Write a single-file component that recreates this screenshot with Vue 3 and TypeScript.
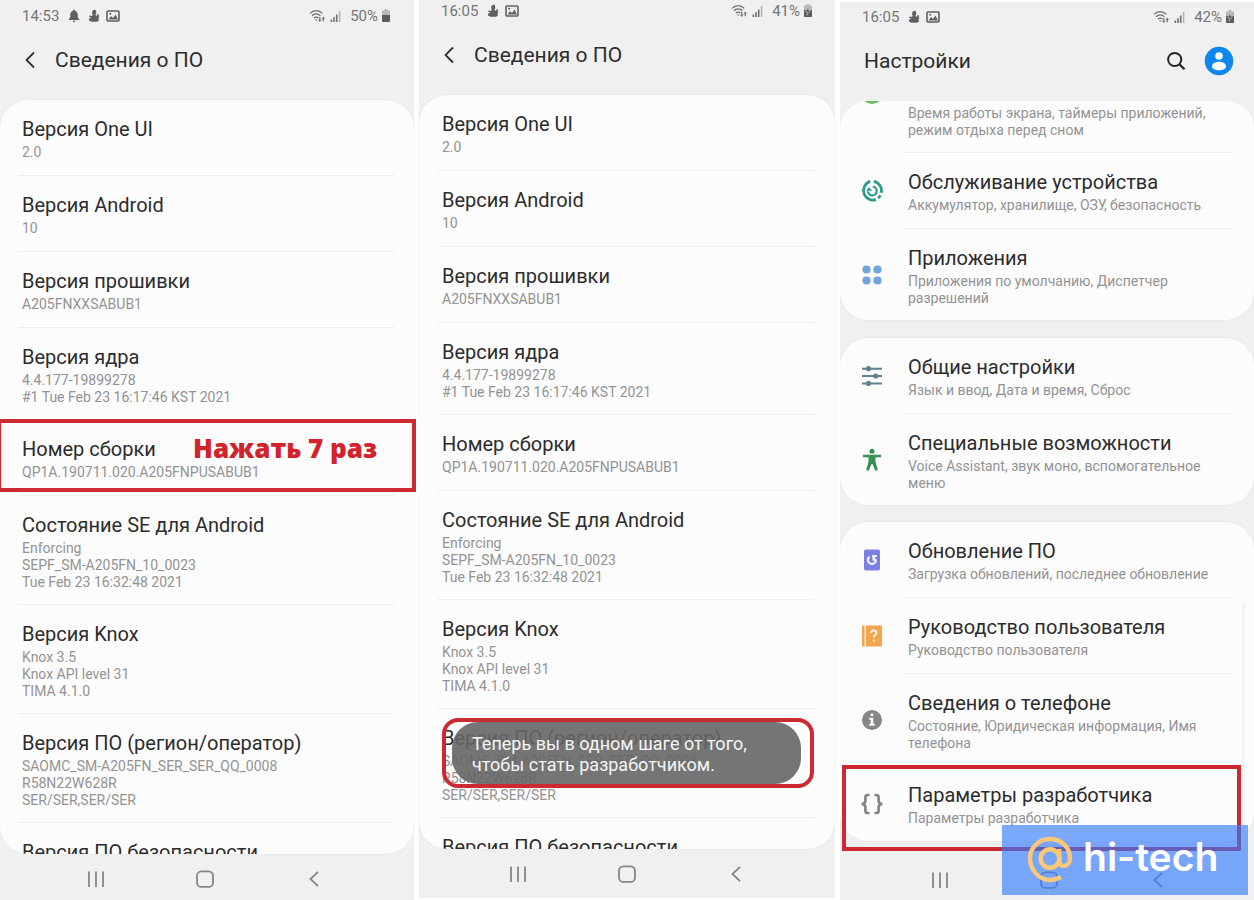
<script setup lang="ts">
interface InfoRow {
  title: string
  lines: string[]
}

interface SettingRow {
  icon: string
  title?: string
  text: string
  tall?: boolean
}

interface Screen {
  id: string
  kind: 'info' | 'settings'
  heading: string
  time: string
  battery: string
  bell?: boolean
  charging?: boolean
}

const screens: Screen[] = [
  { id: 'first', kind: 'info', heading: 'Сведения о ПО', time: '14:53', battery: '50%', bell: true },
  { id: 'second', kind: 'info', heading: 'Сведения о ПО', time: '16:05', battery: '41%', charging: true },
  { id: 'third', kind: 'settings', heading: 'Настройки', time: '16:05', battery: '42%', charging: true },
]

const infoRows: InfoRow[] = [
  { title: 'Версия One UI', lines: ['2.0'] },
  { title: 'Версия Android', lines: ['10'] },
  { title: 'Версия прошивки', lines: ['A205FNXXSABUB1'] },
  { title: 'Версия ядра', lines: ['4.4.177-19899278', '#1 Tue Feb 23 16:17:46 KST 2021'] },
  { title: 'Номер сборки', lines: ['QP1A.190711.020.A205FNPUSABUB1'] },
  { title: 'Состояние SE для Android', lines: ['Enforcing', 'SEPF_SM-A205FN_10_0023', 'Tue Feb 23 16:32:48 2021'] },
  { title: 'Версия Knox', lines: ['Knox 3.5', 'Knox API level 31', 'TIMA 4.1.0'] },
  { title: 'Версия ПО (регион/оператор)', lines: ['SAOMC_SM-A205FN_SER_SER_QQ_0008', 'R58N22W628R', 'SER/SER,SER/SER'] },
  { title: 'Версия ПО безопасности', lines: [] },
]

const groups: SettingRow[][] = [
  [
    { icon: 'wellbeing', text: 'Время работы экрана, таймеры приложений, режим отдыха перед сном', tall: true },
    { icon: 'care', title: 'Обслуживание устройства', text: 'Аккумулятор, хранилище, ОЗУ, безопасность' },
    { icon: 'apps', title: 'Приложения', text: 'Приложения по умолчанию, Диспетчер разрешений', tall: true },
  ],
  [
    { icon: 'sliders', title: 'Общие настройки', text: 'Язык и ввод, Дата и время, Сброс' },
    { icon: 'person', title: 'Специальные возможности', text: 'Voice Assistant, звук моно, вспомогательное меню', tall: true },
  ],
  [
    { icon: 'update', title: 'Обновление ПО', text: 'Загрузка обновлений, последнее обновление' },
    { icon: 'manual', title: 'Руководство пользователя', text: 'Руководство пользователя' },
    { icon: 'about', title: 'Сведения о телефоне', text: 'Состояние, Юридическая информация, Имя телефона', tall: true },
    { icon: 'braces', title: 'Параметры разработчика', text: 'Параметры разработчика' },
  ],
]
</script>

<template>
  <main class="page">
    <section v-for="s in screens" :key="s.id" class="phone" :class="s.id">
      <div class="status">
        <span class="clock">{{ s.time }}</span>
        <svg v-if="s.bell" class="s-bell" width="12" height="14" viewBox="0 0 12 14">
          <path d="M6 .8c.8 0 1.2.5 1.2 1.1C9 2.5 9.8 4 9.8 6v2.6l1.5 1.7v.8H.7v-.8l1.5-1.7V6c0-2 .8-3.500 2.600-4.100C4.800 1.300 5.200.8 6 .8zM4.700 11.800h2.600c0 .9-.6 1.400-1.300 1.400s-1.300-.5-1.300-1.400z" fill="#606060" />
        </svg>
        <svg width="12" height="14" viewBox="0 0 12 14">
          <path d="M4.500 1.800 6.500.6l1.700 1.200v2.600l-.8 1 .6 1.400 1.500-.6V4.800l1.500.6-.3 2 1 .6-1.200 1 .5 2.400-2 1.400H3.500L.8 11.400l.4-1.900 2-.5L.9 7.200l1-.8 2 .6.8-1.500-.7-1.300z" fill="#606060" />
        </svg>
        <svg width="14" height="12" viewBox="0 0 14 12">
          <rect x="1" y="1" width="12" height="10" rx="1" fill="none" stroke="#606060" stroke-width="1.600" />
          <path d="M2.500 9.500 5 6l2 2 2.500-3.500 2.500 5z" fill="#606060" />
          <circle cx="4.300" cy="3.800" r="1" fill="#606060" />
        </svg>
        <span class="spacer"></span>
        <svg width="17" height="14" viewBox="0 0 17 14">
          <g fill="none" stroke="#707070" stroke-width="1.300">
            <path d="M1 4.400C4.600.7 9.800.7 13.400 4.400M3 6.800c2.500-2.500 6-2.500 8.400 0M5 9c1.300-1.300 3.100-1.300 4.400 0" />
          </g>
          <path d="m7.200 12-1.300-1.500h2.600zM10.800 13 9 10.700h1.200V8h1.200v2.700h1.200zM14.300 7.500l1.700 2.300h-1.100v2.400h-1.200V9.800h-1.100z" fill="#707070" />
        </svg>
        <svg class="s-signal" width="12" height="12" viewBox="0 0 12 12">
          <path d="M.5 9.500h1.600V12H.5zM3.200 7.300h1.600V12H3.200zM5.900 4.600h1.600V12H5.900z" fill="#707070" />
          <path d="M8.800 1h1.600v11H8.800z" fill="#b4b4b4" />
        </svg>
        <span class="percent">{{ s.battery }}</span>
        <svg class="s-battery" width="8" height="13" viewBox="0 0 8 13">
          <path d="M2.500 0h3v1.500H8V6H0V1.500h2.500z" fill="#b8b8b8" />
          <path d="M0 6h8v6.200q0 .8-.8.8H.8q-.8 0-.8-.8z" fill="#5c5c5c" />
          <path v-if="s.charging" d="M4.800 2.500 1.500 7.800h2L3 11.200l3.500-5h-2z" fill="#505050" stroke="#d0d0d0" stroke-width=".6" />
        </svg>
      </div>

      <header class="head">
        <button v-if="s.kind === 'info'" type="button" class="icon-btn back" aria-label="Назад">
          <svg width="12" height="18" viewBox="0 0 12 18"><path d="M10 1.500 2.500 9l7.500 7.500" fill="none" stroke="#303030" stroke-width="1.800" /></svg>
        </button>
        <h1>{{ s.heading }}</h1>
        <template v-if="s.kind === 'settings'">
          <span class="spacer"></span>
          <button type="button" class="icon-btn" aria-label="Поиск">
            <svg width="20" height="20" viewBox="0 0 20 20"><circle cx="8.700" cy="8.500" r="6.600" fill="none" stroke="#252525" stroke-width="2" /><path d="m13.400 13.200 5.100 5.100" stroke="#252525" stroke-width="2.300" /></svg>
          </button>
          <button type="button" class="icon-btn avatar" aria-label="Учетная запись">
            <svg width="30" height="30" viewBox="0 0 30 30"><circle cx="15" cy="15" r="14.300" fill="#0d86ee" /><circle cx="15" cy="10" r="3.800" fill="#f7fbff" /><path d="M8 20.500c0-3.100 3.200-4.700 7-4.700s7 1.600 7 4.700c0 2.400-3 3.800-7 3.800s-7-1.400-7-3.800z" fill="#f7fbff" /></svg>
          </button>
        </template>
      </header>

      <ul v-if="s.kind === 'info'" class="card info">
        <li v-for="row in infoRows" :key="row.title" class="info-row" :class="{ multi: row.lines.length > 1 }">
          <h2>{{ row.title }}</h2>
          <p v-for="line in row.lines" :key="line">{{ line }}</p>
        </li>
      </ul>

      <div v-else class="scroller">
        <ul v-for="(group, g) in groups" :key="g" class="card">
          <li v-for="row in group" :key="row.icon">
            <a href="#" class="setting" :class="{ cut: !row.title, tall: row.tall }">
              <span class="glyph">
                <svg width="24" height="24" viewBox="0 0 24 24" aria-hidden="true">
                  <circle v-if="row.icon === 'wellbeing'" cx="12" cy="12" r="11" fill="#6fb868" />
                  <g v-else-if="row.icon === 'care'" fill="none" stroke="#2c9a88">
                    <path d="M13.800 2.400a9.500 9.500 0 0 1 7.500 11.400M20.400 16.300A9.500 9.500 0 0 1 18 19.300M16 20.600A9.500 9.500 0 1 1 10.200 2.400" stroke-width="2.700" />
                    <path d="M12.800 7.700a4.400 4.400 0 1 1-4.900 4.600" stroke-width="2.200" />
                    <path d="M6 11.800h6.200L9 8.300z" fill="#2c9a88" stroke="none" />
                  </g>
                  <g v-else-if="row.icon === 'apps'" fill="#6fa4dc">
                    <circle cx="6.500" cy="6.500" r="4.100" /><circle cx="17.500" cy="6.500" r="4.100" /><circle cx="6.500" cy="17.500" r="4.100" /><circle cx="17.500" cy="17.500" r="4.100" />
                  </g>
                  <g v-else-if="row.icon === 'sliders'" fill="#62818d">
                    <path d="M2 3.700h20v2H2zM2 11h20v2H2zM2 18.400h20v2H2z" />
                    <circle cx="8.500" cy="4.700" r="2.600" /><circle cx="15.700" cy="12" r="2.600" /><circle cx="8.500" cy="19.400" r="2.600" />
                  </g>
                  <g v-else-if="row.icon === 'person'" fill="#369155">
                    <circle cx="12" cy="3.200" r="2.500" />
                    <path d="M3 6.700h18v2.500h-5.500v4.300L17.800 22l-2.600.7L12.500 16h-1l-2.700 6.700-2.600-.7 2.300-8.500V9.200H3z" />
                  </g>
                  <g v-else-if="row.icon === 'update'">
                    <rect x="4" y="1.500" width="16" height="21" rx="1.800" fill="#7c80e2" />
                    <path d="M9.600 8.800a3.900 3.900 0 1 0 6.100 2.400" fill="none" stroke="#f4f4ff" stroke-width="2.100" />
                    <path d="M12 7h4.700v2h-1.500v3.700H12.700z" fill="#f4f4ff" />
                  </g>
                  <g v-else-if="row.icon === 'manual'">
                    <path d="M2 1.500h2.600v21H2zM5.800 1.500h15.400q.8 0 .8.800v19.400q0 .8-.8.800H5.800z" fill="#f2a650" />
                    <path d="M11 9c0-3.600 5.500-3.500 5.500-.2 0 2.200-2.700 2.300-2.700 4.800M13.800 15.500v2" fill="none" stroke="#fff8ea" stroke-width="1.800" />
                  </g>
                  <g v-else-if="row.icon === 'about'">
                    <circle cx="12" cy="12" r="10" fill="#868686" />
                    <path d="M10.700 5.500h2.600v2.600h-2.600zM9.300 9.800h4v6h1.500v2H9.200v-2h1.500v-4H9.300z" fill="#fcfcfc" />
                  </g>
                  <path v-else d="M9.500 3H7.700Q5.400 3 5.400 5.300v3.200Q5.400 12 1.500 12q3.900 0 3.900 3.500v3.200Q5.400 21 7.700 21h1.800M14.500 3h1.800q2.300 0 2.300 2.300v3.200Q18.600 12 22.500 12q-3.900 0-3.900 3.500v3.200q0 2.300-2.300 2.300h-1.800" fill="none" stroke="#868686" stroke-width="2.700" />
                </svg>
              </span>
              <span class="words">
                <span v-if="row.title" class="name">{{ row.title }}</span>
                <span class="note">{{ row.text }}</span>
              </span>
            </a>
          </li>
        </ul>
      </div>

      <nav class="keys">
        <button type="button" class="icon-btn" aria-label="Последние">
          <svg width="20" height="20" viewBox="0 0 20 20"><path d="M3 2.500v15.500M10 2.500v15.500M17 2.500v15.500" stroke="#858585" stroke-width="1.800" /></svg>
        </button>
        <button type="button" class="icon-btn" aria-label="Главный экран">
          <svg width="20" height="20" viewBox="0 0 20 20"><rect x="2" y="2.300" width="16" height="15.600" rx="4.500" fill="none" stroke="#858585" stroke-width="1.800" /></svg>
        </button>
        <button type="button" class="icon-btn" aria-label="Назад">
          <svg width="20" height="20" viewBox="0 0 20 20"><path d="M14 2.800 6.500 10l7.500 7.200" fill="none" stroke="#858585" stroke-width="1.800" /></svg>
        </button>
      </nav>

      <div v-if="s.id === 'first'" class="frame frame-build"><strong>Нажать 7 раз</strong></div>
      <div v-if="s.id === 'second'" class="frame frame-toast">
        <p class="toast" role="status">Теперь вы в одном шаге от того, чтобы стать разработчиком.</p>
      </div>
      <template v-if="s.id === 'third'">
        <span class="scrollbar"></span>
        <div class="frame frame-dev"></div>
        <div class="brand">
          <svg width="48" height="50" viewBox="0 0 48 50" aria-hidden="true">
            <g fill="none" stroke="#fcc878" stroke-width="4.400">
              <circle cx="24" cy="23.500" r="9.300" />
              <path d="M33.300 14v11.500c0 8 10.700 7 10.700-2C44 12 35 4 24 4S4 12.500 4 23.500 13 45 24 45c4 0 7.500-1 11-3" />
            </g>
          </svg>
          <span>hi-tech</span>
        </div>
      </template>
    </section>
  </main>
</template>

<style>
body {
  margin: 0;
  background: #fff;
}
</style>

<style scoped>
.page {
  display: grid;
  grid-template-columns: 414fr 416fr 414fr;
  column-gap: 5px;
  height: 100vh;
  overflow: hidden;
  font-family: Roboto, "Noto Sans", sans-serif;
  color: #2c2c2c;
}

.phone {
  position: relative;
  display: flex;
  flex-direction: column;
  min-width: 0;
  min-height: 0;
  box-sizing: border-box;
  background: #f0f0f0;
}

.first {
  --inset: 18px;
  --status-end: 24px;
  padding-top: 5px;
}

.second {
  --inset: 19px;
  --status-end: 23px;
  margin-bottom: 2px;
}

.third {
  --status-end: 20px;
  margin-top: 2px;
  padding-top: 4px;
}

h1,
h2,
p,
ul {
  margin: 0;
  padding: 0;
  font-weight: 400;
  list-style: none;
}

.icon-btn {
  display: flex;
  align-items: center;
  justify-content: center;
  padding: 0;
  border: 0;
  background: none;
}

.spacer {
  flex: 1;
}

.status {
  display: flex;
  align-items: center;
  gap: 6px;
  flex: none;
  height: 21px;
  padding: 0 var(--status-end) 0 22px;
  font-size: 15px;
  color: #757575;
}

.clock {
  margin-right: 3px;
}

.s-bell {
  margin-right: 2px;
}

.s-signal {
  margin-left: -2px;
}

.percent {
  margin-left: 2px;
}

.s-battery {
  margin-left: -2px;
}

.head {
  display: flex;
  align-items: center;
  flex: none;
  height: 68px;
  padding: 0 20px 0 24px;
  margin-bottom: 6px;
}

.back {
  margin-right: 19px;
}

h1 {
  font-size: 21px;
  line-height: 28px;
}

.avatar {
  margin-left: 18px;
}

.card {
  border-radius: 28px;
  background: #fcfcfc;
  box-shadow: 0 0 2px #dedede;
}

.info {
  flex: 1;
  min-height: 0;
  overflow: hidden;
}

.info-row {
  margin: 0 20px 0 var(--inset);
  padding: 15px 4px 14px;
  border-bottom: 1px solid #eee;
}

.info-row.multi {
  padding-bottom: 13px;
}

h2,
.name {
  margin-bottom: 1px;
  font-size: 20px;
  line-height: 28px;
}

.info-row p,
.note {
  font-size: 14px;
  line-height: 17px;
  color: #939393;
}

.scroller {
  flex: 1;
  min-height: 0;
  overflow: hidden;
  border-radius: 28px 28px 0 0;
}

.scroller .card {
  margin-bottom: 17px;
}

.scroller .card:first-child {
  margin-top: -68px;
  margin-bottom: 18px;
}

.setting {
  display: flex;
  align-items: stretch;
  color: inherit;
  text-decoration: none;
}

.glyph {
  display: flex;
  align-items: center;
  justify-content: center;
  flex: none;
  width: 64px;
}

.words {
  display: flex;
  flex: 1;
  flex-direction: column;
  margin-right: 22px;
  padding: 15px 4px 14px;
  border-bottom: 1px solid #eee;
}

.tall .words {
  padding-bottom: 13px;
}

.cut .words {
  padding-top: 72px;
}

.card li:last-child .words {
  border-bottom: 0;
}

.keys {
  display: flex;
  justify-content: center;
  align-items: flex-start;
  flex: none;
  height: 49px;
}

.first .keys {
  height: 46px;
  padding-right: 5px;
}

.third .keys {
  height: 45px;
  padding-left: 3px;
}

.keys .icon-btn {
  width: 109px;
  height: 50px;
}

.frame {
  position: absolute;
  box-sizing: border-box;
  border: 4px solid #cb2a33;
}

.frame-build {
  top: 419px;
  left: -3px;
  right: -2px;
  height: 73px;
  padding-left: 192px;
}

.frame-build strong {
  font: 800 26px/50px "Open Sans", "Noto Sans", sans-serif;
  color: #d2222b;
}

.frame-toast {
  top: 718px;
  left: 23px;
  right: 21px;
  height: 70px;
  border-radius: 16px;
  padding: 0 9px 0 6px;
}

.toast {
  height: 62px;
  box-sizing: border-box;
  padding: 11px 40px 9px 20px;
  border-radius: 26px;
  background: rgba(102, 102, 102, 0.9);
  color: #f5f5f5;
  font-size: 18px;
  line-height: 21px;
}

.frame-dev {
  top: 763px;
  left: 2px;
  right: 13px;
  height: 86px;
}

.scrollbar {
  position: absolute;
  top: 600px;
  right: 9px;
  width: 3px;
  height: 230px;
  background: #f5f5f5;
}

.brand {
  position: absolute;
  right: 6px;
  bottom: 5px;
  display: flex;
  align-items: center;
  gap: 9px;
  box-sizing: border-box;
  width: 246px;
  height: 70px;
  padding-left: 24px;
  background: rgba(49, 122, 253, 0.64);
  color: #fff;
  font: 600 39px/60px Inter, sans-serif;
}

.brand span {
  padding-bottom: 6px;
}
</style>
